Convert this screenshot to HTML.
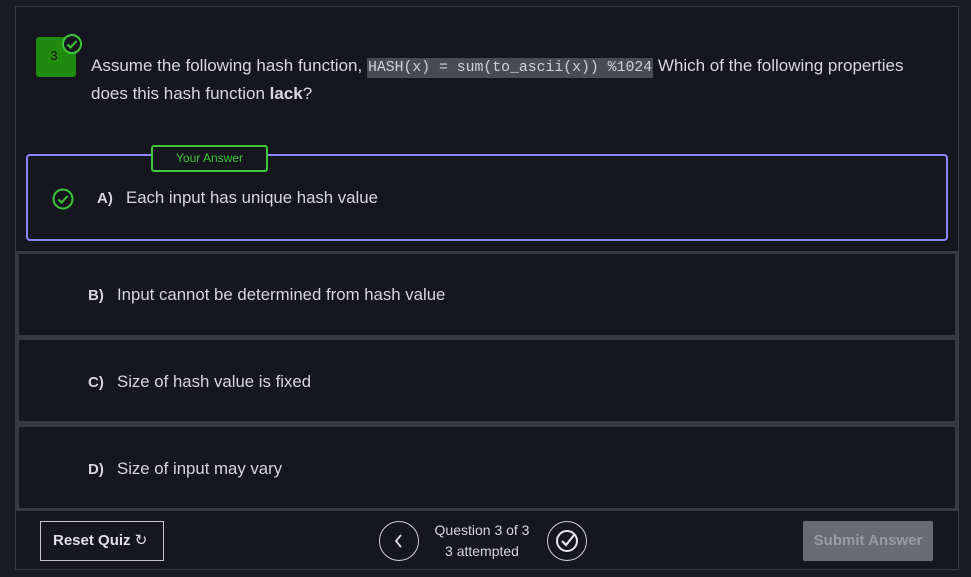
<!DOCTYPE html>
<html><head><style>
*{box-sizing:border-box;margin:0;padding:0}
body{width:971px;height:577px;background:#1b1c23;font-family:"Liberation Sans",sans-serif;color:#d6d6dc;position:relative;overflow:hidden}
.frame{position:absolute;left:15px;top:6px;width:944px;height:564px;background:#15161e;border:1px solid #3a3b44}
.abs{position:absolute}
.q{left:91px;top:52px;width:835px;font-size:17px;line-height:28px;color:#d8d8de}
code{font-family:"Liberation Mono",monospace;font-size:14.8px;line-height:14px;background:#4a4a55;color:#d0d0d8;padding:2px 1px}
.num{left:36px;top:37px;width:40px;height:40px;background:#1f8a0e;border-radius:3px;color:#111;font-size:13px;text-align:center;line-height:38px;padding-right:4px}
.selA{left:26px;top:154px;width:922px;height:87px;border:2px solid #8b84ff;border-radius:4px}
.ya{left:151px;top:145px;width:117px;height:27px;border:2px solid #3fc63a;border-radius:3px;background:#15161e;color:#3fc63a;font-size:12px;text-align:center;line-height:23px}
.opt{left:16px;width:942px;height:87px;border:3px solid #373840;background:#15161e}
.lab{font-size:16.8px;color:#d6d6dc}
.lab b{display:inline-block;width:29px;font-size:15px}
</style></head><body>
<div class="frame"></div>
<div class="abs num">3</div>
<svg class="abs" style="left:61px;top:33px" width="22" height="22" viewBox="0 0 22 22"><circle cx="11" cy="11" r="9" fill="#15161e" stroke="#3fc63a" stroke-width="2"/><path d="M6.5 11.5l3 3 6-6.5" fill="none" stroke="#3fc63a" stroke-width="2"/></svg>
<div class="abs q">Assume the following hash function, <code>HASH(x) = sum(to_ascii(x)) %1024</code> Which of the following properties does this hash function <b>lack</b>?</div>
<div class="abs selA"></div>
<div class="abs ya">Your Answer</div>
<svg class="abs" style="left:51px;top:187px" width="24" height="24" viewBox="0 0 24 24"><circle cx="12" cy="12" r="9.5" fill="none" stroke="#3fc63a" stroke-width="2"/><path d="M7.5 12.5l3 3 6-6.5" fill="none" stroke="#3fc63a" stroke-width="2"/></svg>
<div class="abs lab" style="left:97px;top:188px"><b>A)</b>Each input has unique hash value</div>
<div class="abs opt" style="top:251px"></div>
<div class="abs lab" style="left:88px;top:285px"><b>B)</b>Input cannot be determined from hash value</div>
<div class="abs opt" style="top:337px"></div>
<div class="abs lab" style="left:88px;top:372px"><b>C)</b>Size of hash value is fixed</div>
<div class="abs opt" style="top:424px"></div>
<div class="abs lab" style="left:88px;top:459px"><b>D)</b>Size of input may vary</div>
<div class="abs" style="left:40px;top:521px;width:124px;height:40px;border:1px solid #c8c8cc;font-size:15px;font-weight:bold;line-height:38px;padding-left:12px;color:#e0e0e4">Reset Quiz <span style="font-weight:normal">&#8635;</span></div>
<svg class="abs" style="left:378px;top:520px" width="42" height="42" viewBox="0 0 42 42"><circle cx="21" cy="21" r="19.5" fill="none" stroke="#d0d0d4" stroke-width="1"/><path d="M23 15l-5 6 5 6" fill="none" stroke="#e0e0e4" stroke-width="1.8"/></svg>
<div class="abs" style="left:425px;top:520px;width:114px;text-align:center;font-size:14px;line-height:21px;color:#d6d6dc">Question 3 of 3<br>3 attempted</div>
<svg class="abs" style="left:546px;top:520px" width="42" height="42" viewBox="0 0 42 42"><circle cx="21" cy="21" r="19.5" fill="none" stroke="#d0d0d4" stroke-width="1"/><circle cx="21" cy="21" r="10" fill="none" stroke="#e8e8ec" stroke-width="2"/><path d="M16 21l4 4 8-10" fill="none" stroke="#e8e8ec" stroke-width="2.2"/></svg>
<div class="abs" style="left:803px;top:521px;width:130px;height:40px;background:#6a6a75;border-radius:2px;color:#9a9aa4;font-size:15px;font-weight:bold;text-align:center;line-height:40px">Submit Answer</div>
</body></html>
